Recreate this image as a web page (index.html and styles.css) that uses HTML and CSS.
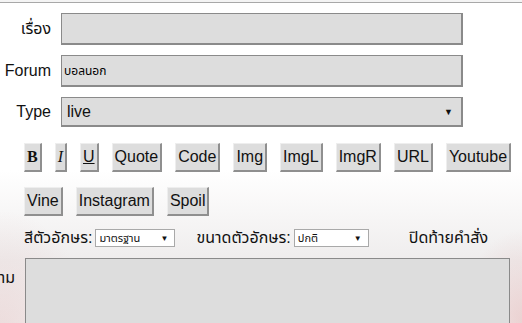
FILE: index.html
```html
<!DOCTYPE html>
<html lang="th">
<head>
    <meta charset="UTF-8">
    <title>ตั้งกระทู้</title>
    <link rel="stylesheet" href="styles.css">
</head>
<body>
    <div class="topbar"></div>
    <form class="post-form">
        <div class="field">
            <label class="label">เรื่อง</label>
            <input class="text-input" type="text" value="">
        </div>
        <div class="field">
            <label class="label">Forum</label>
            <input class="text-input small" type="text" value="บอลนอก">
        </div>
        <div class="field">
            <label class="label">Type</label>
            <div class="select-box">
                <span>live</span>
                <span class="arrow">&#9660;</span>
            </div>
        </div>

        <div class="toolbar">
            <button type="button" class="tag bold">B</button>
            <button type="button" class="tag ital">I</button>
            <button type="button" class="tag under">U</button>
            <button type="button" class="tag">Quote</button>
            <button type="button" class="tag">Code</button>
            <button type="button" class="tag">Img</button>
            <button type="button" class="tag">ImgL</button>
            <button type="button" class="tag">ImgR</button>
            <button type="button" class="tag">URL</button>
            <button type="button" class="tag">Youtube</button>
        </div>
        <div class="toolbar">
            <button type="button" class="tag">Vine</button>
            <button type="button" class="tag">Instagram</button>
            <button type="button" class="tag">Spoil</button>
        </div>

        <div class="font-row">
            <span>สีตัวอักษร:</span>
            <div class="mini-select color"><span>มาตรฐาน</span><span class="arrow">&#9660;</span></div>
            <span class="gap">ขนาดตัวอักษร:</span>
            <div class="mini-select size"><span>ปกติ</span><span class="arrow">&#9660;</span></div>
            <span class="close-tag">ปิดท้ายคำสั่ง</span>
        </div>

        <div class="message">
            <label class="msg-label">ข้อความ</label>
            <div class="textarea"></div>
        </div>
    </form>
</body>
</html>
```

FILE: styles.css
```css
body {
    margin: 0;
    font-family: "Liberation Sans", "Noto Sans", "Noto Sans Thai", sans-serif;
    font-size: 16px;
    color: #111;
    background:
        radial-gradient(ellipse 90px 120px at 0 330px, rgba(230, 200, 200, 0.5), transparent),
        radial-gradient(ellipse 60px 90px at 522px 320px, rgba(230, 190, 190, 0.6), transparent),
        linear-gradient(#ffffff 0, #ffffff 170px, #efeded 260px, #f3f0f0 323px);
    height: 323px;
    overflow: hidden;
}
.topbar {
    height: 2px;
    border-bottom: 1px solid #a8a8a8;
    background: #f4f4f4;
}
.post-form {
    padding-top: 10px;
}
.field {
    display: flex;
    align-items: center;
    gap: 10px;
    margin-bottom: 10px;
}
.label {
    width: 51px;
    text-align: right;
    white-space: nowrap;
}
.text-input {
    width: 402px;
    height: 32px;
    box-sizing: border-box;
    margin: 0;
    padding: 0 2px;
    border: 1px solid #8a8a8a;
    border-width: 1px 2px 2px 1px;
    background: #dddddd;
    font: inherit;
}
.text-input.small {
    font-size: 12px;
}
.select-box {
    width: 402px;
    height: 30px;
    box-sizing: border-box;
    display: flex;
    align-items: center;
    justify-content: space-between;
    padding: 0 8px 0 5px;
    border: 1px solid #8a8a8a;
    border-width: 1px 2px 2px 1px;
    background: #dddddd;
}
.arrow {
    font-size: 9px;
}
.toolbar {
    display: flex;
    gap: 13px;
    padding-left: 24px;
    margin-top: 16px;
}
.toolbar + .toolbar {
    margin-top: 15px;
}
.tag {
    height: 29px;
    padding: 0 2px;
    margin: 0;
    font: inherit;
    color: #111;
    background: #dddddd;
    border: 1px solid;
    border-color: #eeeeee #8f8f8f #8f8f8f #eeeeee;
    border-width: 1px 2px 2px 1px;
}
.tag.bold {
    font-family: "Liberation Serif", serif;
    font-weight: bold;
}
.tag.ital {
    font-family: "Liberation Serif", serif;
    font-style: italic;
}
.tag.under {
    text-decoration: underline;
}
.font-row {
    display: flex;
    align-items: center;
    padding-left: 24px;
    margin-top: 11px;
    height: 22px;
}
.mini-select {
    display: flex;
    align-items: center;
    justify-content: space-between;
    height: 18px;
    box-sizing: border-box;
    margin-left: 3px;
    padding: 0 6px 0 3px;
    border: 1px solid #a9a9a9;
    background: #fff;
    font-size: 11px;
}
.mini-select .arrow {
    font-size: 8px;
}
.mini-select.color {
    width: 80px;
}
.mini-select.size {
    width: 75px;
}
.gap {
    margin-left: 21px;
}
.close-tag {
    margin-left: 40px;
}
.message {
    display: flex;
    align-items: flex-start;
    gap: 10px;
    margin-top: 9px;
}
.msg-label {
    width: 15px;
    display: flex;
    justify-content: flex-end;
    white-space: nowrap;
    margin-top: 8px;
}
.textarea {
    width: 485px;
    height: 120px;
    box-sizing: border-box;
    border: 1px solid #8a8a8a;
    background: #dddddd;
}
```
